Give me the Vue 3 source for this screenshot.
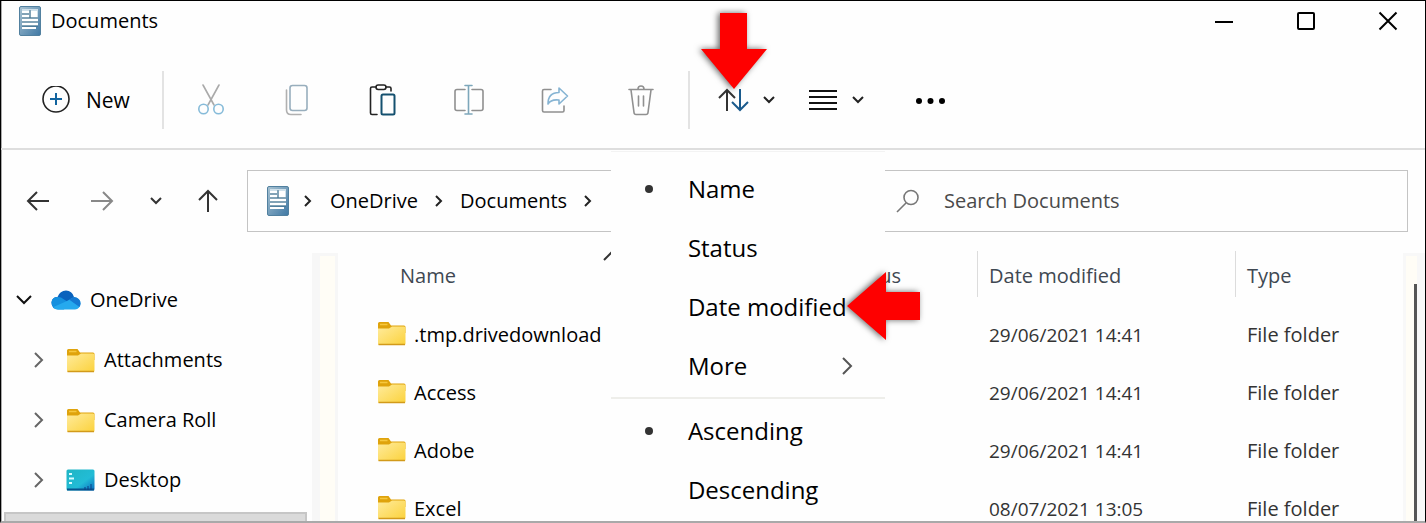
<script setup>
import { ref } from 'vue'

const search = ref('')

const tools = [
  { id: 'cut', label: 'Cut' },
  { id: 'copy', label: 'Copy' },
  { id: 'paste', label: 'Paste' },
  { id: 'rename', label: 'Rename' },
  { id: 'share', label: 'Share' },
  { id: 'trash', label: 'Delete' }
]

const crumbs = ['OneDrive', 'Documents']

const tree = [
  { name: 'Attachments', icon: 'folder' },
  { name: 'Camera Roll', icon: 'folder' },
  { name: 'Desktop', icon: 'desktop' }
]

const files = [
  { name: '.tmp.drivedownload', date: '29/06/2021 14:41', type: 'File folder' },
  { name: 'Access', date: '29/06/2021 14:41', type: 'File folder' },
  { name: 'Adobe', date: '29/06/2021 14:41', type: 'File folder' },
  { name: 'Excel', date: '08/07/2021 13:05', type: 'File folder' }
]

const sortFields = [
  { name: 'Name', checked: true },
  { name: 'Status' },
  { name: 'Date modified', pointed: true },
  { name: 'More', sub: true }
]
const sortOrders = [{ name: 'Ascending', checked: true }, { name: 'Descending' }]
</script>

<template>
  <div class="window">
    <svg class="defs" aria-hidden="true">
      <defs>
        <linearGradient id="gFolder" x1="0" y1="0" x2="1" y2="1">
          <stop offset="0" stop-color="#ffeb9c" />
          <stop offset="1" stop-color="#fbd23c" />
        </linearGradient>
        <linearGradient id="gDoc" x1="0" y1="0" x2="1" y2="1">
          <stop offset="0" stop-color="#a9c3d2" />
          <stop offset="1" stop-color="#3f78a4" />
        </linearGradient>
        <linearGradient id="gDesk" x1="0" y1="0" x2="1" y2="1">
          <stop offset="0" stop-color="#1fb5c4" />
          <stop offset="0.6" stop-color="#22bcd6" />
          <stop offset="1" stop-color="#0a6cc0" />
        </linearGradient>
        <symbol id="folder" viewBox="0 0 29 25">
          <path d="M1 2.500Q1 1 2.500 1H11.500L14 4.500H27Q28.500 4.500 28.500 6V12H1Z" fill="#dfa30c" />
          <path d="M3 3.500H10.500" stroke="#f6c83e" stroke-width="1.500" />
          <path d="M1 7.500H12L15 5.500H27Q28.500 5.500 28.500 7V22.500Q28.500 24 27 24H2.500Q1 24 1 22.500Z" fill="url(#gFolder)" />
          <path d="M1.500 23.500H28" stroke="#d29a1a" stroke-width="1.500" />
        </symbol>
        <symbol id="doc" viewBox="0 0 22 30">
          <rect x="0.500" y="0.500" width="21" height="29" rx="1.500" fill="url(#gDoc)" stroke="#51809f" />
          <path d="M3 3H19V20H3Z" fill="#cfe0ea" />
          <path d="M3 6H10M3 10H10M3 14H19M3 18H19M3 22H17" stroke="#fff" stroke-width="2" />
          <path d="M3 8H10M3 12H19M3 16H19M3 20H19M11 4V12" stroke="#376783" stroke-width="1" />
          <rect x="12" y="5" width="6" height="6" fill="#fff" />
        </symbol>
        <symbol id="desktop" viewBox="0 0 29 22">
          <rect x="0.500" y="0.500" width="28" height="21" rx="1.500" fill="url(#gDesk)" />
          <path d="M1 20.500H28" stroke="#07538d" stroke-width="2" />
          <path d="M3 5H6M3 9.500H8M3 14H6" stroke="#d8fbff" stroke-width="2" />
          <path d="M19 18V21M22 17V21M25 15V21" stroke="#0a3f86" />
        </symbol>
      </defs>
    </svg>

    <header class="titlebar">
      <svg class="doc-icon"><use href="#doc" /></svg>
      <h1>Documents</h1>
      <div class="controls">
        <button type="button" aria-label="Minimize">
          <svg width="20" height="20" viewBox="0 0 20 20"><path d="M1 11H19" stroke="#000" stroke-width="2" /></svg>
        </button>
        <button type="button" aria-label="Maximize">
          <svg width="20" height="20" viewBox="0 0 20 20"><rect x="2" y="2" width="16" height="16" rx="1" fill="none" stroke="#000" stroke-width="2" /></svg>
        </button>
        <button type="button" aria-label="Close">
          <svg width="20" height="20" viewBox="0 0 20 20"><path d="M1.500 1.500L18.500 18.500M18.500 1.500L1.500 18.500" stroke="#000" stroke-width="2" /></svg>
        </button>
      </div>
    </header>

    <div class="toolbar">
      <button type="button" class="new">
        <svg width="28" height="28" viewBox="0 0 28 28" fill="none">
          <circle cx="14" cy="13" r="13" stroke="#222" stroke-width="1.600" />
          <path d="M14 7V19M8 13H20" stroke="#12649f" stroke-width="2" />
        </svg>
        <span>New</span>
      </button>
      <span class="divider"></span>
      <button v-for="t in tools" :key="t.id" type="button" class="tool" :aria-label="t.label">
        <svg width="32" height="32" viewBox="0 0 32 32" fill="none" stroke-width="1.600" stroke-linecap="round" stroke-linejoin="round">
          <g v-if="t.id === 'cut'">
            <path d="M8 1L19 21M24 1L13 21" stroke="#aaa" />
            <circle cx="8.500" cy="25" r="4.700" stroke="#86bbd9" />
            <circle cx="23.500" cy="25" r="4.700" stroke="#86bbd9" />
          </g>
          <g v-else-if="t.id === 'copy'">
            <rect x="9" y="1.500" width="17" height="25" rx="2.500" stroke="#98aebd" />
            <path d="M5.500 6V26Q5.500 30.500 10 30.500H20" stroke="#b0b0b0" />
          </g>
          <g v-else-if="t.id === 'paste'">
            <path d="M9 3H5Q3.500 3 3.500 4.500V29Q3.500 30.500 5 30.500H10M19 3H22.500Q24 3 24 4.500V7" stroke="#222" />
            <rect x="9" y="1" width="10" height="4.500" rx="2.200" stroke="#222" />
            <rect x="14.500" y="10.500" width="13" height="20" rx="1.500" stroke="#14506f" stroke-width="2" />
          </g>
          <g v-else-if="t.id === 'rename'">
            <path d="M12 5.500H4Q2 5.500 2 7.500V24.500Q2 26.500 4 26.500H12M19 5.500H28Q30 5.500 30 7.500V24.500Q30 26.500 28 26.500H19" stroke="#909090" />
            <path d="M12 1.500H19M15.500 1.500V30M12 30H19" stroke="#7da7bb" />
          </g>
          <g v-else-if="t.id === 'share'">
            <path d="M12 5.500H5Q3.500 5.500 3.500 7V26.500Q3.500 28 5 28H23.500Q25 28 25 26.500V22" stroke="#909090" />
            <path d="M20 4L28.500 12L20 20V16Q12 15 9 20Q9 8.500 20 8.500Z" stroke="#86b4d3" />
          </g>
          <g v-else>
            <path d="M4 5.500H28M6 6L9 28.500Q9.200 30.500 11 30.500H21Q22.800 30.500 23 28.500L26 6M13 5Q13 2 16 2Q19 2 19 5M13.500 12V22M18.500 12V22" stroke="#909090" />
          </g>
        </svg>
      </button>
      <span class="divider second"></span>
      <div class="sort">
        <button type="button" class="drop" aria-label="Sort" aria-haspopup="menu">
          <svg width="34" height="26" viewBox="0 0 34 26" fill="none" stroke-width="2">
            <path d="M11 24V3M3 11L11 3L19 11" stroke="#333" />
            <path d="M24 2V23M16 15L24 23L32 15" stroke="#1a5a8c" />
          </svg>
          <svg class="chev" width="14" height="14" viewBox="0 0 14 14"><path d="M2 4L7 9L12 4" /></svg>
        </button>
        <div class="menu" role="menu">
          <button v-for="i in sortFields" :key="i.name" type="button" role="menuitem" class="item">
            <span class="mark"><i v-if="i.checked"></i></span>
            <span>{{ i.name }}</span>
            <svg v-if="i.sub" class="more" width="12" height="20" viewBox="0 0 12 20"><path d="M2 2L10 10L2 18" fill="none" stroke="#555" stroke-width="2" /></svg>
            <svg v-if="i.pointed" class="arrow-left" width="74" height="68" viewBox="0 0 74 68"><path d="M0 34L39 0V20H73V48H39V68Z" fill="#fe0000" /></svg>
          </button>
          <hr />
          <button v-for="i in sortOrders" :key="i.name" type="button" role="menuitem" class="item">
            <span class="mark"><i v-if="i.checked"></i></span>
            <span>{{ i.name }}</span>
          </button>
        </div>
        <svg class="arrow-down" width="66" height="76" viewBox="0 0 66 76"><path d="M19 0H46V36H66L33 76L0 36H19Z" fill="#fe0000" /></svg>
      </div>
      <button type="button" class="drop view" aria-label="View">
        <svg width="32" height="20" viewBox="0 0 32 20"><path d="M2 1H30M2 7H30M2 13H30M2 19H30" stroke="#111" stroke-width="2" /></svg>
        <svg class="chev" width="14" height="14" viewBox="0 0 14 14"><path d="M2 4L7 9L12 4" /></svg>
      </button>
      <button type="button" class="drop dots" aria-label="See more">
        <svg width="32" height="8" viewBox="0 0 32 8"><circle cx="4" cy="5" r="3" /><circle cx="15.500" cy="5" r="3" /><circle cx="27" cy="5" r="3" /></svg>
      </button>
    </div>

    <nav class="navbar">
      <button type="button" aria-label="Back">
        <svg width="24" height="24" viewBox="0 0 24 24"><path d="M23 12H2M11 3L2 12L11 21" stroke="#333" /></svg>
      </button>
      <button type="button" class="forward" aria-label="Forward">
        <svg width="24" height="24" viewBox="0 0 24 24"><path d="M1 12H22M13 3L22 12L13 21" stroke="#888" /></svg>
      </button>
      <button type="button" class="recent" aria-label="Recent locations">
        <svg width="14" height="14" viewBox="0 0 14 14"><path d="M2 4L7 9L12 4" stroke="#333" /></svg>
      </button>
      <button type="button" class="up" aria-label="Up">
        <svg width="24" height="24" viewBox="0 0 24 24"><path d="M12 23V2M3 11L12 2L21 11" stroke="#333" /></svg>
      </button>
      <div class="address">
        <svg class="doc-icon"><use href="#doc" /></svg>
        <svg class="sep" width="8" height="14" viewBox="0 0 8 14"><path d="M1 2L6 7L1 12" /></svg>
        <template v-for="c in crumbs" :key="c">
          <a href="#">{{ c }}</a>
          <svg class="sep" width="8" height="14" viewBox="0 0 8 14"><path d="M1 2L6 7L1 12" /></svg>
        </template>
      </div>
      <label class="search">
        <svg width="24" height="24" viewBox="0 0 24 24" fill="none" stroke="#777" stroke-width="1.600"><circle cx="15" cy="8.500" r="7" /><path d="M10 14L1 23" /></svg>
        <input v-model="search" type="text" placeholder="Search Documents" aria-label="Search Documents" />
      </label>
    </nav>

    <div class="body">
      <aside class="sidebar">
        <a href="#" class="node root">
          <svg class="twist" width="18" height="12" viewBox="0 0 18 12"><path d="M2 2L9 9L16 2" stroke="#111" /></svg>
          <svg width="30" height="20" viewBox="0 0 30 20">
            <path d="M7 19Q0.500 18 0.500 12.500Q1 7 6.500 7Q9 0.500 15 0.500Q21 0.500 23 7L26 12L12 19Z" fill="#0a62bd" />
            <path d="M6.500 7Q1 7 0.500 12.500Q0.500 19 7 19.500H13L17 12L10 7.500Q8.500 6.800 6.500 7Z" fill="#1590df" />
            <path d="M16 11L23 7Q29.500 8 29.500 13.500Q29 19 24 19.500H7Q4 19.500 2.500 17Z" fill="#25a9ee" />
            <path d="M18 9.500L23 7Q29.500 8 29.500 13.500Q29.500 15 28.500 17Z" fill="#1479d2" />
          </svg>
          <span>OneDrive</span>
        </a>
        <a v-for="n in tree" :key="n.name" href="#" class="node">
          <svg class="twist" width="12" height="18" viewBox="0 0 12 18"><path d="M2 2L9 9L2 16" stroke="#666" /></svg>
          <svg :class="n.icon"><use :href="'#' + n.icon" /></svg>
          <span>{{ n.name }}</span>
        </a>
        <div class="selected"></div>
      </aside>
      <div class="splitter"></div>
      <main class="list">
        <table>
          <colgroup><col /><col class="c-status" /><col class="c-date" /><col class="c-type" /></colgroup>
          <thead>
            <tr>
              <th class="name-head">Name
                <svg class="caret" width="16" height="10" viewBox="0 0 16 10"><path d="M1 9L8 2L15 9" fill="none" stroke="#333" stroke-width="2" /></svg>
              </th>
              <th>Status</th>
              <th>Date modified</th>
              <th>Type</th>
            </tr>
          </thead>
          <tbody>
            <tr v-for="f in files" :key="f.name">
              <td class="name"><div><svg class="folder"><use href="#folder" /></svg><span>{{ f.name }}</span></div></td>
              <td></td>
              <td class="date">{{ f.date }}</td>
              <td>{{ f.type }}</td>
            </tr>
          </tbody>
        </table>
      </main>
      <div class="scrollbar"><span></span></div>
    </div>
  </div>
</template>

<style>
body {
  background: #fff;
}
</style>

<style scoped>
* {
  box-sizing: border-box;
}
.window {
  display: flex;
  flex-direction: column;
  height: 100vh;
  overflow: hidden;
  border: 1px solid #000;
  border-bottom: 2px solid #a9a9a9;
  box-shadow: inset 1px 0 0 #aaa;
  background: #fefefe;
  color: #000;
  font: 20px/28px "Open Sans", "Noto Sans", sans-serif;
}
svg {
  display: block;
  flex: none;
}
.defs {
  position: absolute;
  width: 0;
  height: 0;
}
button {
  display: flex;
  align-items: center;
  padding: 0;
  border: 0;
  background: none;
  color: inherit;
  font: inherit;
}
a {
  color: inherit;
  text-decoration: none;
}
.doc-icon {
  width: 22px;
  height: 30px;
}
.titlebar {
  display: flex;
  flex: none;
  align-items: center;
  height: 39px;
  padding-left: 18px;
}
h1 {
  margin: 0 0 0 10px;
  font-size: 20px;
  font-weight: 400;
}
.controls {
  display: flex;
  margin-left: auto;
}
.controls button {
  justify-content: center;
  width: 82px;
  height: 38px;
}
.controls button:last-child {
  margin-right: -4px;
}
.toolbar {
  display: flex;
  flex: none;
  align-items: center;
  height: 110px;
  padding: 12px 0 0 41px;
  border-bottom: 2px solid #dedede;
}
.new {
  gap: 16px;
  height: 60px;
  font-size: 21px;
}
.divider {
  width: 2px;
  height: 58px;
  margin: 0 4px 0 32px;
  background: #e3e3e3;
}
.divider.second {
  margin: 0 0 0 4px;
}
.tool {
  justify-content: center;
  width: 86px;
  height: 60px;
}
.sort {
  position: relative;
  margin-left: 26px;
}
.drop {
  gap: 12px;
  height: 60px;
}
.chev path,
.navbar button path,
.twist path,
.sep path {
  fill: none;
  stroke-width: 2;
}
.chev path,
.sep path {
  stroke: #222;
}
.view {
  margin-left: 31px;
}
.dots {
  margin-left: 50px;
}
.menu {
  position: absolute;
  top: 81px;
  left: -105px;
  z-index: 2;
  width: 274px;
  padding: 7px 0 40px;
  background: #fefefe;
  border-top: 1px solid #f3f3f3;
}
.item {
  position: relative;
  width: 100%;
  height: 59px;
  font-size: 24px;
  line-height: 32px;
}
.mark {
  width: 77px;
  padding-left: 34px;
}
.mark i {
  display: block;
  width: 8px;
  height: 8px;
  border-radius: 50%;
  background: #333;
}
.more {
  margin: 0 32px 0 auto;
}
hr {
  height: 2px;
  margin: 2px 0;
  border: 0;
  background: #eeeeea;
}
.arrow-left,
.arrow-down {
  position: absolute;
  z-index: 3;
  filter: drop-shadow(-2px 0 3px rgba(0, 0, 0, 0.6));
}
.arrow-left {
  top: -5px;
  left: 236px;
}
.arrow-down {
  top: -57px;
  left: -15px;
}
.navbar {
  display: flex;
  flex: none;
  align-items: center;
  height: 101px;
  padding: 0 17px 0 25px;
}
.navbar button {
  justify-content: center;
  width: 24px;
  height: 40px;
  margin-right: 40px;
}
.navbar .forward {
  margin-right: 35px;
}
.navbar .recent {
  width: 14px;
  margin-right: 33px;
}
.navbar .up {
  margin-right: 27px;
}
.address,
.search {
  display: flex;
  align-items: center;
  height: 62px;
  border: 1px solid #c4c4c4;
}
.address {
  flex: 1;
  padding-left: 19px;
}
.address .sep {
  margin: 0 18px 0 15px;
}
.address a + .sep {
  margin: 0 17px;
}
.search {
  flex: 0 0 538px;
  margin-left: 12px;
  padding-left: 25px;
}
.search input {
  flex: 1;
  min-width: 0;
  margin-left: 24px;
  padding: 0;
  border: 0;
  outline: 0;
  background: none;
  font: inherit;
}
.search input::placeholder {
  color: #4a4a4a;
  opacity: 1;
}
.body {
  display: flex;
  flex: 1;
  min-height: 0;
}
.sidebar {
  flex: none;
  width: 311px;
  padding: 19px 5px 0 3px;
}
.node {
  display: flex;
  align-items: center;
  height: 60px;
  padding-left: 26px;
}
.node.root {
  padding-left: 11px;
}
.node .twist {
  width: 18px;
  margin-right: 18px;
}
.node span {
  margin-left: 9px;
}
.folder {
  width: 29px;
  height: 25px;
}
.desktop {
  width: 29px;
  height: 22px;
}
.selected {
  height: 60px;
  margin-top: 2px;
  border: 2px solid #c6c6c6;
  background: #dadada;
}
.splitter {
  flex: none;
  width: 26px;
  margin-top: 2px;
  border: solid #f7f7f7;
  border-width: 3px 3px 0 8px;
  background: #fffdf6;
}
.list {
  flex: 1;
  min-width: 0;
}
table {
  width: 100%;
  table-layout: fixed;
  border-collapse: collapse;
}
.c-status {
  width: 146px;
}
.c-date {
  width: 258px;
}
.c-type {
  width: 168px;
}
th,
td {
  padding: 0 0 0 12px;
  color: #333;
  font-weight: 400;
  text-align: left;
  white-space: nowrap;
}
th {
  height: 46px;
  padding-top: 4px;
  color: #3f4852;
  box-shadow: inset 1px 0 0 #dcdcdc;
}
th.name-head {
  position: relative;
  padding-left: 62px;
  box-shadow: none;
}
.caret {
  position: absolute;
  top: 0;
  left: 265px;
}
tbody tr {
  height: 58px;
}
thead::after {
  content: "";
  display: block;
  height: 9px;
}
td.name {
  padding-left: 39px;
  color: #000;
}
.name div {
  display: flex;
  align-items: flex-start;
  gap: 8px;
}
.date {
  font-size: 19px;
}
.scrollbar {
  display: flex;
  flex: none;
  justify-content: flex-end;
  width: 22px;
  margin-top: 2px;
  padding-top: 28px;
  border: solid #f8f8f8;
  border-width: 3px 8px 0 3px;
  background: #fffdf6;
}
.scrollbar span {
  width: 3px;
  background: #555;
}
</style>
